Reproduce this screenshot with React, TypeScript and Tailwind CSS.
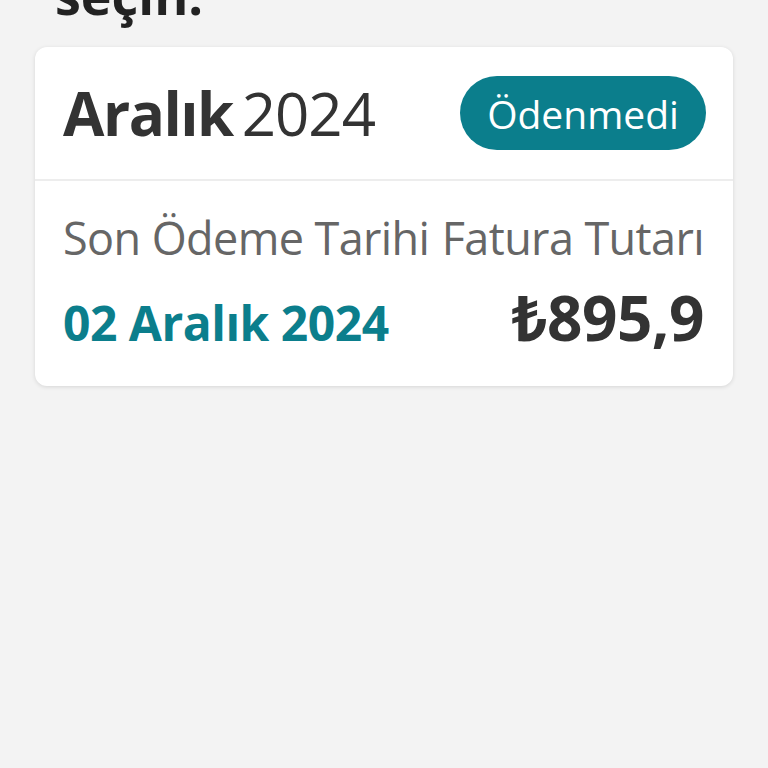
export default function App() {
  return (
    <div className="min-h-[768px] w-[768px] bg-[#f3f3f3] overflow-hidden" style={{ fontFamily: '"Open Sans", "Noto Sans", sans-serif' }}>
      <div className="h-[47px] relative overflow-hidden">
        <div className="absolute left-[55px] bottom-[26px] text-[52px] leading-none font-bold text-[#222]">seçin.</div>
      </div>
      <div className="mx-[35px] bg-white rounded-[12px] shadow-[0_1px_4px_rgba(0,0,0,0.12)]">
        <div className="h-[134px] flex items-center justify-between pl-[28px] pr-[27px] border-b-2 border-[#ededed]">
          <div className="flex items-baseline gap-[9px] text-[#333] text-[60px] leading-none">
            <span className="font-bold tracking-[-1.5px]">Aralık</span>
            <span className="tracking-[-1px]">2024</span>
          </div>
          <div className="w-[246px] h-[74px] rounded-full bg-[#0b7e8c] flex items-center justify-center text-white text-[39px] leading-none">
            Ödenmedi
          </div>
        </div>
        <div className="pl-[28px] pr-[29px] pt-[21px] pb-[28px]">
          <div className="flex justify-between text-[#666] text-[45px] leading-[72px] tracking-[-0.6px]">
            <span>Son Ödeme Tarihi</span>
            <span>Fatura Tutarı</span>
          </div>
          <div className="flex justify-between items-baseline h-[84px] pt-[12px]">
            <span className="text-[#0b7e8c] font-bold text-[48px] leading-none tracking-[-0.5px]">02 Aralık 2024</span>
            <span className="text-[#333] font-bold text-[62px] leading-none tracking-[-0.5px]">₺895,9</span>
          </div>
        </div>
      </div>
    </div>
  );
}
